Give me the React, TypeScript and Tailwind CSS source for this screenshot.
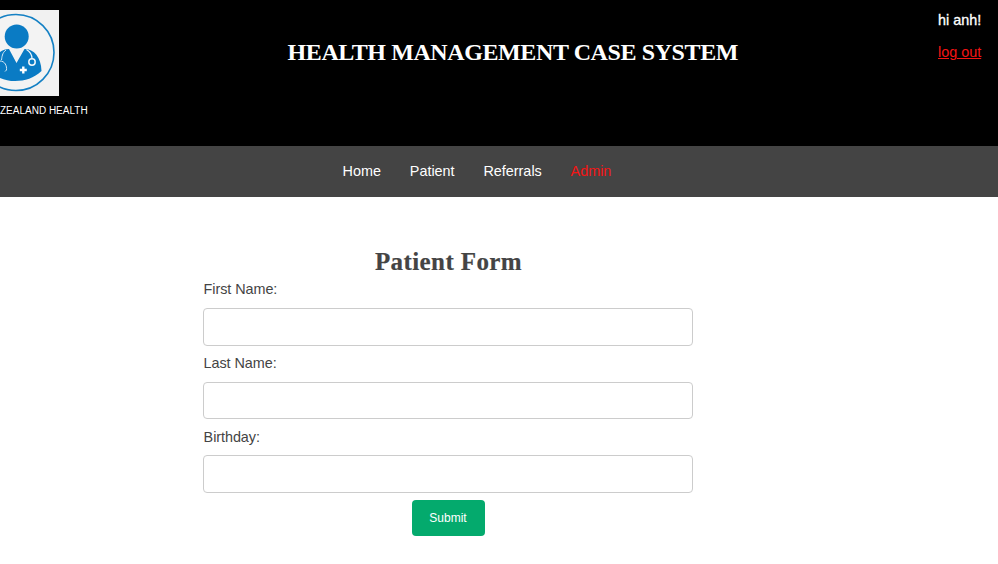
const links = [
  { label: 'Home', color: 'text-white' },
  { label: 'Patient', color: 'text-white' },
  { label: 'Referrals', color: 'text-white' },
  { label: 'Admin', color: 'text-[#f51414]' },
];

const fields = [
  { label: 'First Name:', box: 'mt-[9px] h-[38px]', text: 'pt-[3px]' },
  { label: 'Last Name:', box: 'mt-[9px] h-[37px]', text: 'pt-[3px]' },
  { label: 'Birthday:', box: 'mt-[8px] h-[38px]', text: 'pt-[4px]' },
];

function Logo() {
  return (
    <svg className="block h-[86px] w-[59px]" viewBox="0 0 59 86" fill="none">
      <rect width="59" height="86" fill="#f1f1f1" />
      <circle cx="16" cy="42.5" r="38" fill="#f3f3f3" stroke="#1480c4" strokeWidth="1.6" />
      <circle cx="16.7" cy="26.5" r="12" fill="#0a7bc4" />
      <path
        d="M-8 62 C-7 46 0 39 9 39 L16.500 53 L24.500 39 C34 39 41 47 41.500 61 C34 68 25 71 15 71 C6 71 -3 68 -8 62Z"
        fill="#0a7bc4"
      />
      <path d="M10.500 39 H22 L16.500 52Z" fill="#f3f3f3" />
      <path d="M26.500 39.500 C30.500 42 32 45 32 48.500" stroke="#f1f7fb" strokeWidth="1.300" />
      <circle cx="32" cy="52" r="3.200" stroke="#f1f7fb" strokeWidth="1.500" />
      <path d="M6 40 C2 43 2 47 1.500 50 M0 51 C5 51 7 56 6.500 60 L5 61.500" stroke="#d4e8f5" strokeWidth="1" />
      <path d="M23.300 56.500 V63.500 M19.800 60 H26.800" stroke="#fff" strokeWidth="2.400" />
    </svg>
  );
}

export default function App() {
  return (
    <div className="h-[564px] overflow-hidden bg-white font-['Liberation_Sans',Arial,sans-serif] text-[14.4px] text-[#444]">
      <header className="flex h-[146px] bg-black text-white">
        <div className="w-[287.5px] pt-[10px]">
          <Logo />
          <p className="mt-[7px] text-[10px] leading-[16px] whitespace-nowrap">ZEALAND HEALTH</p>
        </div>
        <h1 className="pt-[38px] font-['Liberation_Serif',serif] text-[24px] leading-[28px] font-bold tracking-[-0.4px] whitespace-nowrap">
          HEALTH MANAGEMENT CASE SYSTEM
        </h1>
        <div className="ml-auto w-[60px] pt-[10px] leading-[20px]">
          <p className="[-webkit-text-stroke:0.3px_white]">hi anh!</p>
          <a href="#" className="mt-[12px] block text-[#f51414] underline">log out</a>
        </div>
      </header>
      <nav className="flex h-[51px] gap-[28.8px] bg-[#444] pt-[15px] pl-[342.6px] leading-[20px]">
        {links.map((link) => (
          <a key={link.label} href="#" className={link.color}>{link.label}</a>
        ))}
      </nav>
      <form className="ml-[203px] flex w-[490px] flex-col pt-[51px]">
        <h2 className="pl-[1px] text-center font-['Liberation_Serif',serif] text-[25px] leading-[28px] font-bold tracking-[0.4px] [-webkit-text-stroke:0.2px_#444]">
          Patient Form
        </h2>
        {fields.map((field) => (
          <label key={field.label} className="block pb-[4px] leading-[20px]">
            <span className={`block pl-[0.6px] tracking-[-0.06px] ${field.text}`}>{field.label}</span>
            <input type="text" className={`block w-full rounded-[4px] border border-[#ccc] ${field.box}`} />
          </label>
        ))}
        <button type="button" className="mt-[3px] h-[36px] w-[73px] self-center rounded-[4px] bg-[#04aa6d] text-[12px] text-white">
          Submit
        </button>
      </form>
    </div>
  );
}
